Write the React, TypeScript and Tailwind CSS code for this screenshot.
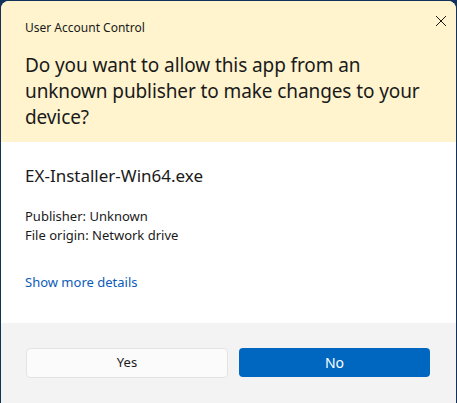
export default function App() {
  return (
    <div className="w-[457px] h-[403px] bg-[#12325a] pt-px px-px overflow-hidden" style={{ fontFamily: '"Noto Sans", "Open Sans", sans-serif' }}>
      <div className="h-full flex flex-col rounded-t-lg overflow-hidden bg-white">
        {/* Header */}
        <div className="h-[141px] bg-[#fff4ce] relative px-6 pt-[19px]">
          <p className="text-[12px] leading-[16px] text-[#1a1a1a]">User Account Control</p>
          <button className="absolute top-[12px] right-[7px] w-4 h-4 flex items-center justify-center text-[#1a1a1a]">
            <svg width="12" height="12" viewBox="0 0 12 12" fill="none" stroke="currentColor" strokeWidth="1">
              <path d="M1 1L11 11M11 1L1 11" />
            </svg>
          </button>
          <h1 className="mt-[16px] text-[19px] leading-[26px] tracking-[-0.1px] text-[#1a1a1a] font-normal">
            Do you want to allow this app from an unknown publisher to make changes to your device?
          </h1>
        </div>

        {/* Body */}
        <div className="h-[181px] bg-white px-6 pt-[22px]">
          <p className="text-[17px] leading-[24px] text-[#1a1a1a]">EX-Installer-Win64.exe</p>
          <div className="mt-[19px] text-[13px] leading-[19px] text-[#1a1a1a]">
            <p>Publisher: Unknown</p>
            <p>File origin: Network drive</p>
          </div>
          <a className="block mt-[28px] text-[13px] leading-[19px] text-[#0a5cb8]">Show more details</a>
        </div>

        {/* Footer */}
        <div className="flex-1 bg-[#f3f3f3] px-[25px] pt-[25px] flex gap-[11px]">
          <button className="w-[202px] h-[30px] rounded-[4px] bg-[#fbfbfb] border border-[#e3e3e3] text-[13px] text-[#1a1a1a]">
            Yes
          </button>
          <button className="w-[191px] h-[29px] rounded-[4px] bg-[#0067c0] text-[14px] text-white">
            No
          </button>
        </div>
      </div>
    </div>
  );
}
